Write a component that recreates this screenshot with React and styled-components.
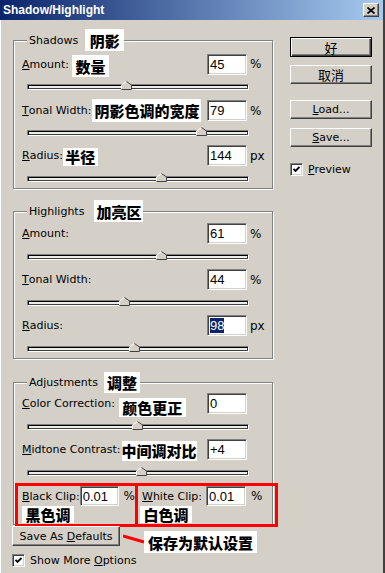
import React from 'react';
import styled, { createGlobalStyle, css } from 'styled-components';

const GlobalStyle = createGlobalStyle`
  html, body { margin: 0; padding: 0; background: #d4d0c8; }
  body {
    font-family: "DejaVu Sans", Verdana, sans-serif;
    font-size: 11px;
    color: #000;
  }
`;

// shadows / highlights / adjustments data, pos = thumb place on the track (0..1)
const groups = [
  {
    title: 'Shadows', note: '阴影', noteW: 39, noteGap: 7, mt: 0, pt: 2,
    rows: [
      { k: 'A', rest: 'mount:', note: '数量', w: 37, ml: 3, dy: 2, h: 22, value: '45', unit: '%', pos: 0.45 },
      { k: 'T', rest: 'onal Width:', note: '阴影色调的宽度', w: 109, ml: 1, h: 23, value: '79', unit: '%', pos: 0.79 },
      { k: 'R', rest: 'adius:', note: '半径', w: 35, ml: 0, dy: 1, h: 18, value: '144', unit: 'px', pos: 0.61 },
    ],
  },
  {
    title: 'Highlights', note: '加亮区', noteW: 49, noteGap: 10, mt: 11, pt: 1,
    rows: [
      { k: 'A', rest: 'mount:', value: '61', unit: '%', pos: 0.61 },
      { k: 'T', rest: 'onal Width:', value: '44', unit: '%', pos: 0.44 },
      { k: 'R', rest: 'adius:', value: '98', unit: 'px', pos: 0.485, selected: true },
    ],
  },
];

const adjustRows = [
  { k: 'C', rest: 'olor Correction:', note: '颜色更正', w: 67, ml: 4, dy: 4, h: 19, value: '0', pos: 0.5 },
  { k: 'M', rest: 'idtone Contrast:', note: '中间调对比', w: 75, ml: 1, dy: 1, h: 20, value: '+4', pos: 0.52 },
];

const Window = styled.div`
  width: 385px;
  height: 573px;
  box-sizing: border-box;
  overflow: hidden;
  background: #d4d0c8;
  border-right: 2px solid #404040;
`;

const TitleBar = styled.div`
  height: 20px;
  display: flex;
  align-items: center;
  justify-content: space-between;
  padding: 0 4px 0 3px;
  background: linear-gradient(to right, #0a246a, #a6caf0);
  color: #fff;
  font: bold 12px "Liberation Sans", Arial, sans-serif;
`;

const CloseBtn = styled.div`
  width: 16px;
  height: 14px;
  box-sizing: border-box;
  display: flex;
  align-items: center;
  justify-content: center;
  background: #d4d0c8;
  border: 1px solid;
  border-color: #fff #404040 #404040 #fff;
  box-shadow: inset -1px -1px 0 #808080;
`;

const Body = styled.div`
  display: flex;
  align-items: flex-start;
  height: 553px;
  box-sizing: border-box;
  padding: 9px 0 0 12px;
  box-shadow: inset 1px 0 0 #fff;
`;

const LeftCol = styled.div`
  width: 262px;
  display: flex;
  flex-direction: column;
`;

const RightCol = styled.div`
  width: 82px;
  margin-left: 16px;
  padding-top: 8px;
  display: flex;
  flex-direction: column;
`;

const Group = styled.fieldset`
  margin: ${p => p.$mt}px 0 0 1px;
  width: 260px;
  min-width: 0;
  box-sizing: border-box;
  padding: ${p => p.$pt}px 0 0 8px;
  border: 1px solid #808080;
  box-shadow: inset 1px 1px 0 #fff, 1px 1px 0 #fff;
`;

const Legend = styled.legend`
  display: flex;
  align-items: center;
  height: 22px;
  padding: 0 0 0 2px;
  margin-left: 5px;
  background: #d4d0c8;
`;

const Row = styled.div`
  display: grid;
  grid-template-columns: 1fr 40px 25px;
  align-items: center;
  height: 21px;
`;

const Label = styled.div`
  display: flex;
  align-items: center;
  white-space: nowrap;
  height: 100%;
`;

const Key = styled.span`
  text-decoration: underline;
`;

const Note = styled.span`
  display: inline-flex;
  align-items: center;
  justify-content: center;
  flex: none;
  width: ${p => p.$w}px;
  height: ${p => p.$h || 21}px;
  margin-left: ${p => p.$ml || 0}px;
  margin-top: ${p => p.$mt || 0}px;
  transform: translateY(${p => p.$dy || 0}px);
  background: #fff;
  color: #000;
  font: 900 15px "Noto Sans CJK SC", sans-serif;
  line-height: 1;
  white-space: nowrap;
`;

const ValueBox = styled.div`
  width: ${p => p.$w || 40}px;
  height: ${p => p.$h || 21}px;
  box-sizing: border-box;
  background: #fff;
  border: 1px solid;
  border-color: #808080 #fff #fff #808080;
  box-shadow: inset 1px 1px 0 #404040, inset -1px -1px 0 #d4d0c8;
  display: flex;
  align-items: center;
  padding-left: 2px;
  font: 13px "Liberation Sans", Arial, sans-serif;
`;

const Selected = styled.span`
  background: #0a246a;
  color: #fff;
`;

const Unit = styled.span`
  padding-left: ${p => p.$pl ?? 3}px;
  font-size: 12px;
`;

const SliderWrap = styled.div`
  padding: 10px 0 ${p => (p.$last ? 6 : 9)}px 5px;
`;

const Track = styled.div`
  position: relative;
  width: 222px;
  height: 6px;
  box-sizing: border-box;
  border: 1px solid;
  border-color: #808080 #fff #fff #808080;
  background: #ecebe8;
  box-shadow: inset 1px 1px 0 #000, inset -1px -1px 0 #404040;
`;

const Thumb = styled.div`
  position: absolute;
  top: -4px;
  width: 11px;
  height: 9px;
  margin-left: -6px;
  line-height: 0;
`;

const ClipRow = styled.div`
  display: flex;
  margin: -2px -6px -3px -7px;
`;

const ClipBox = styled.div`
  width: ${p => p.$w}px;
  box-sizing: border-box;
  border: 3px solid #ff0000;
  padding-left: 4px;
  & + & {
    margin-left: -3px;
  }
`;

const ClipLine = styled.div`
  display: flex;
  align-items: center;
  height: 20px;
`;

const ClipLabel = styled.div`
  width: ${p => p.$w}px;
  white-space: nowrap;
`;

const SaveRow = styled.div`
  display: flex;
  align-items: flex-start;
  margin-top: 1px;
`;

const Button = styled.div`
  width: ${p => p.$w || 82}px;
  height: ${p => p.$h || 19}px;
  box-sizing: border-box;
  display: flex;
  align-items: center;
  justify-content: center;
  margin-top: ${p => p.$mt || 0}px;
  background: #d4d0c8;
  border: 1px solid;
  border-color: #fff #404040 #404040 #fff;
  box-shadow: inset -1px -1px 0 #808080;
  white-space: pre;
  ${p => p.$cjk && css`
    font: 13px "Noto Sans CJK SC", sans-serif;
  `}
  ${p => p.$default && css`
    border-color: #000;
    box-shadow: inset 1px 1px 0 #fff, inset -1px -1px 0 #404040, inset -2px -2px 0 #808080;
  `}
`;

const CheckRow = styled.div`
  display: flex;
  align-items: center;
  gap: 5px;
  margin-top: ${p => p.$mt || 0}px;
`;

const Check = styled.div`
  width: 13px;
  height: 13px;
  box-sizing: border-box;
  background: #fff;
  border: 1px solid;
  border-color: #808080 #fff #fff #808080;
  box-shadow: inset 1px 1px 0 #404040, inset -1px -1px 0 #d4d0c8;
  display: flex;
  align-items: center;
  justify-content: center;
`;

const ThumbIcon = () => (
  <svg width="11" height="9" viewBox="0 0 11 9">
    <path d="M0.5 8.5V4L5.5 0.5L10.5 4V8.5Z" fill="#d4d0c8" />
    <path d="M0.5 8V4L5.5 0.5" fill="none" stroke="#fff" />
    <path d="M5.5 0.5L10.5 4V8.5H0.5" fill="none" stroke="#404040" />
  </svg>
);

const CheckIcon = () => (
  <svg width="7" height="7" viewBox="0 0 7 7">
    <path d="M0.5 3L2.5 5L6.5 1" fill="none" stroke="#000" strokeWidth="1.8" />
  </svg>
);

function Slider({ pos, last }) {
  return (
    <SliderWrap $last={last}>
      <Track>
        <Thumb style={{ left: `${pos * 100}%` }}>
          <ThumbIcon />
        </Thumb>
      </Track>
    </SliderWrap>
  );
}

function ParamRow({ row, last }) {
  return (
    <>
      <Row>
        <Label>
          <Key>{row.k}</Key>{row.rest}
          {row.note && (
            <Note $w={row.w} $ml={row.ml} $dy={row.dy} $h={row.h}>{row.note}</Note>
          )}
        </Label>
        <ValueBox>{row.selected ? <Selected>{row.value}</Selected> : row.value}</ValueBox>
        {row.unit ? <Unit>{row.unit}</Unit> : <span />}
      </Row>
      <Slider pos={row.pos} last={last} />
    </>
  );
}

export default function App() {
  return (
    <>
      <GlobalStyle />
      <Window>
        <TitleBar>
          <span>Shadow/Highlight</span>
          <CloseBtn>
            <svg width="8" height="7" viewBox="0 0 8 7">
              <path d="M0.5 0.5L7.5 6.5M7.5 0.5L0.5 6.5" stroke="#000" strokeWidth="1.7" />
            </svg>
          </CloseBtn>
        </TitleBar>
        <Body>
          <LeftCol>
            {groups.map(g => (
              <Group key={g.title} $mt={g.mt} $pt={g.pt}>
                <Legend>
                  {g.title}
                  <Note $w={g.noteW} $ml={g.noteGap} $h={22}>{g.note}</Note>
                </Legend>
                {g.rows.map((r, i) => (
                  <ParamRow key={r.rest} row={r} last={i === g.rows.length - 1} />
                ))}
              </Group>
            ))}
            <Group $mt={12} $pt={0}>
              <Legend>
                Adjustments
                <Note $w={36} $ml={6} $h={21}>调整</Note>
              </Legend>
              {adjustRows.map(r => (
                <ParamRow key={r.rest} row={r} />
              ))}
              <ClipRow>
                <ClipBox $w={123}>
                  <ClipLine>
                    <ClipLabel $w={58}><Key>B</Key>lack Clip:</ClipLabel>
                    <ValueBox $h={20}>0.01</ValueBox>
                    <Unit $pl={5}>%</Unit>
                  </ClipLine>
                  <Note $w={52} $h={17}>黑色调</Note>
                </ClipBox>
                <ClipBox $w={143}>
                  <ClipLine>
                    <ClipLabel $w={64}><Key>W</Key>hite Clip:</ClipLabel>
                    <ValueBox $h={20}>0.01</ValueBox>
                    <Unit $pl={5}>%</Unit>
                  </ClipLine>
                  <Note $w={52} $h={17} $ml={-2}>白色调</Note>
                </ClipBox>
              </ClipRow>
            </Group>
            <SaveRow>
              <Button $w={108} $h={20}>
                <span>Save As <Key>D</Key>efaults</span>
              </Button>
              <svg width="22" height="10" viewBox="0 0 22 10" style={{ marginLeft: 3, marginTop: 8 }}>
                <path d="M0 2L21 8" stroke="#ff0000" strokeWidth="3" />
              </svg>
              <Note $w={113} $h={22} $mt={5} $ml={-1}>保存为默认设置</Note>
            </SaveRow>
            <CheckRow $mt={1}>
              <Check><CheckIcon /></Check>
              <span>Show More <Key>O</Key>ptions</span>
            </CheckRow>
          </LeftCol>
          <RightCol>
            <Button $default $cjk $h={20}>好</Button>
            <Button $cjk $mt={8}>取消</Button>
            <Button $mt={16}><span><Key>L</Key>oad...</span></Button>
            <Button $mt={9}><span><Key>S</Key>ave...</span></Button>
            <CheckRow $mt={16}>
              <Check><CheckIcon /></Check>
              <span><Key>P</Key>review</span>
            </CheckRow>
          </RightCol>
        </Body>
      </Window>
    </>
  );
}
